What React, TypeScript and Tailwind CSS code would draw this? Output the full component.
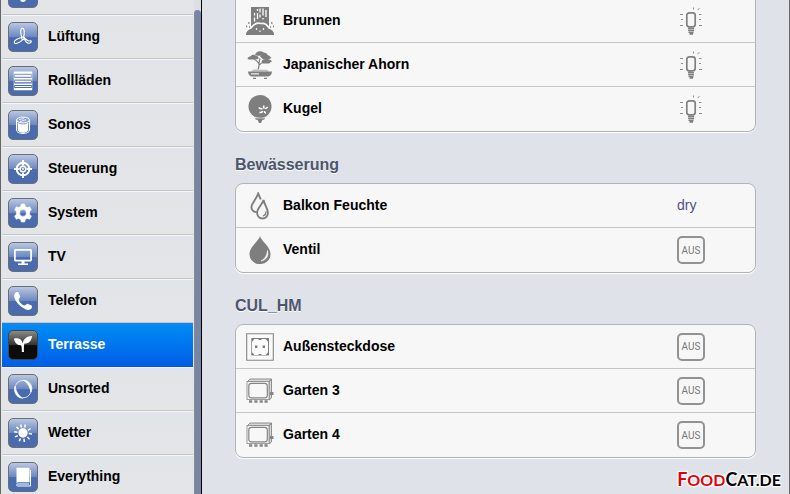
import type { ReactNode } from 'react';

const roomIcons: Record<string, ReactNode> = {
  Licht: <path d="M10 2a6 6 0 0 1 6 6c0 4-3 5-3 8a3 3 0 0 1-6 0c0-3-3-4-3-8a6 6 0 0 1 6-6z" fill="#fff" />,
  Lüftung: (
    <g fill="none" stroke="#fff" strokeWidth="1.100">
      <path d="M9 10.500C7.500 7 7 1.500 9.200 1.200 12 1 11.500 7 10.500 10.500" />
      <path d="M9 10.500C5 11 .8 13.500 1.300 15.600 2 18 7 15.500 9.800 12.600" />
      <path d="M10.800 10.500C12 14 14 17 17 16 19 15 18.500 13 17 14 15 14.500 13 12.500 11 10.500" />
      <circle cx="10" cy="11.300" r="1.300" />
    </g>
  ),
  Rollläden: (
    <g fill="#fff">
      <path d="M1 0.500h18v2.300H1zM2 4h16v1.700H2zM1 7h18v1.500H1zM2 9.800h16v1.500H2zM1 12.500h18V14H1zM2 15h16v1H2zM1 17h18v2.300H1z" />
      <path d="M1 1v18M19 1v18" stroke="#fff" strokeWidth="0.500" />
    </g>
  ),
  Sonos: (
    <g stroke="#fff">
      <path d="M3.500 5v10c0 2.200 3 3.500 6.500 3.500s6.500-1.300 6.500-3.500V5" fill="none" strokeWidth="1" />
      <path d="M5 8v7.500c1 1.500 3 2 5 2s4-.5 5-2V8c-1 1-3 1.500-5 1.500S6 9 5 8z" fill="#fff" strokeWidth="0.500" />
      <ellipse cx="10" cy="5" rx="6.500" ry="2.900" fill="#8ea6d3" strokeWidth="1" />
      <path d="M6 4.500c2 0 3-1 5-1M7 6.500c2 0 4-2 6-1.500" fill="none" strokeWidth="0.800" />
    </g>
  ),
  Steuerung: (
    <g fill="none" stroke="#fff">
      <circle cx="10" cy="10" r="6.300" strokeWidth="2" />
      <circle cx="10" cy="10" r="2.800" strokeWidth="1.500" />
      <circle cx="10" cy="10" r="1" fill="#fff" stroke="none" />
      <path d="M10 1v5.500M10 13.500V19M1 10h5.500M13.500 10H19" strokeWidth="2" />
    </g>
  ),
  System: (
    <path
      d="M8.300 1h3.400l.6 2.500 1.900 1.100 2.500-.8 1.700 3-1.800 1.900v2.600l1.800 1.900-1.700 3-2.500-.8-1.900 1.100-.6 2.500H8.300l-.6-2.500-1.900-1.100-2.500.8-1.700-3 1.800-1.900V8.700L1.600 6.800l1.700-3 2.500.8 1.900-1.100zM10 6.600a3.400 3.400 0 1 0 0 6.800 3.400 3.400 0 0 0 0-6.800z"
      fill="#fff"
      stroke="#fff"
      strokeWidth="0.600"
      strokeLinejoin="round"
      fillRule="evenodd"
    />
  ),
  TV: (
    <g fill="none" stroke="#fff">
      <rect x="1.900" y="2.900" width="16.200" height="10.700" rx="0.500" strokeWidth="1.700" />
      <path d="M10 14v3" strokeWidth="3" />
      <path d="M5 17.200h10" strokeWidth="1.600" />
    </g>
  ),
  Telefon: (
    <path
      d="M2 2.200C3 1 4.800.8 5.500 1.500l1.700 4c.2.800-1.600 2-1.500 2.900.4 2.600 3.300 5.500 6 6 1 .2 2-1.800 2.900-1.600l4 1.800c.8.700.4 2.600-.6 3.500-1.700 1.500-5.600.8-9-1.800C4.800 13 1.600 9.200 1.200 5.500 1.100 4.300 1.400 3 2 2.200z"
      fill="#fff"
    />
  ),
  Terrasse: (
    <path
      d="M1 3.500c4.500-1 8 .5 8.700 5 .5-4.500 4-7.300 9.300-7.500-.3 4.800-3.200 7.800-7.500 7.600-.6 1.200-.6 3-.5 8.400H8.800c.1-4 0-5.500-.8-6.800C3.800 10.400 1.500 7.500 1 3.500z"
      fill="#fff"
    />
  ),
  Unsorted: (
    <g fill="#fff">
      <path d="M2.200 7C.3 11.500 2.500 18.500 9.500 19.200 5.500 16.800 2.700 12.500 2.200 7z" stroke="#fff" strokeWidth="0.800" />
      <path d="M10.500 1.200c7 .3 10 7.500 7.300 12.300C17.300 8.300 15 4 10.500 1.200z" stroke="#fff" strokeWidth="0.800" />
      <path d="M2.500 6.500a8.500 8.500 0 0 1 8-5M17.500 13.800a8.500 8.500 0 0 1-8 5" fill="none" stroke="#fff" strokeWidth="0.800" />
    </g>
  ),
  Wetter: (
    <g stroke="#fff" strokeWidth="1.500">
      <circle cx="10" cy="10" r="3.900" fill="#fff" />
      <path d="M8.300 4.500 7.700 1.500M11.700 4.500l.6-3M15 7.400l2.600-1.900M15.700 10.600l3.300.4M14.300 14l2.200 2.300M11 15.800l.3 3.200M7.500 15.400l-1.200 2.900M4.800 12.700l-2.900 1.200M4.400 9.200l-3.200-.4M5.700 6.100 3.500 3.900" />
    </g>
  ),
  Everything: (
    <g>
      <path d="M4 .8h12.500v14.500H5.500C4 15.300 3.500 16 3.500 17V2C3 1.200 3.500.8 4 .8z" fill="#fff" />
      <path d="M16 17H5c-2 0-2 2 0 2h12.500V3" fill="none" stroke="#fff" strokeWidth="1" />
    </g>
  ),
};

const rooms = ['Lüftung', 'Rollläden', 'Sonos', 'Steuerung', 'System', 'TV', 'Telefon', 'Terrasse', 'Unsorted', 'Wetter', 'Everything'];

function FountainIcon() {
  return (
    <>
      <path d="M5 0h18v19H5z" fill="#7e7e7e" />
      <path d="M8.500 6v2.500M8.500 10.500v4M11.500 2v2M11.500 6v6M14 1.500v4M14 7.500v3M17 1.500v7M20 3v7M17 11v1.500" stroke="#fff" strokeWidth="1.300" />
      <path d="M-1 28.500c0-4 3-6.500 6-7.500 3-4.500 6.500-5.500 10-4.500 3.500-.8 6 1 8 4.500 3 .8 6 3.500 6 7.500z" fill="#7e7e7e" stroke="#f7f7f7" strokeWidth="1.600" />
      <path d="M0 28v-1.500h28V28z" fill="#7e7e7e" />
      <path d="M10.500 21v2M14 23.500v1.500M17.500 21v2" stroke="#eee" strokeWidth="1.300" />
      <path d="M2 16h1.500M0 19.500h1.200M3 20h1M25 16h1.500M27 19.500h1M24 20h1" stroke="#7e7e7e" strokeWidth="1.400" />
    </>
  );
}

function BonsaiIcon() {
  return (
    <g fill="#7e7e7e">
      <path d="M9 3.500C10 2 11.500.2 14 .3c2.500-.3 3 1.200 5 1.500 2 .5 2.500 1.500 2.500 3H11z" />
      <path d="M1.500 8c.5-2 1.500-2.500 3.200-2.800C6 3.500 8.500 3.300 10 4.700c2 .3 2.500 1.400 2.800 2.800L10 8.600H3z" />
      <path d="M14 5.500c1-2 4-2.500 6-1.800 2.500 0 4 1.500 5.500 3.300l-3 1.300H17z" />
      <path d="M15.500 10.500c.5-2 2.500-2.800 5-2.500 2.500-.2 4.500.8 5.500 2.300L23 12.500h-6z" />
      <path d="M8 8.500c2.500.5 3.500 2 4.500 3.500 1 1.500.5 4-.5 6.500M14 7.500c-.5 2-1 3-1 5M18 11.500c-2 0-3.500.5-4.500 2.500" fill="none" stroke="#7e7e7e" strokeWidth="1.200" />
      <path d="M5 20.500c2-2.500 5-1.800 7-1.800h9l2 1.800z" fill="#bdbdbd" />
      <path d="M2 20.500h24c-.3 3.500-2 5-4.500 5h-15C4 25.500 2.300 24 2 20.500z" />
      <path d="M5 22.800h8" stroke="#d5d5d5" strokeWidth="1.600" />
      <path d="M7 27.300h3M18 27.300h3" stroke="#7e7e7e" strokeWidth="1.200" />
    </g>
  );
}

function GlobeIcon() {
  return (
    <g fill="#7e7e7e">
      <circle cx="14" cy="11.500" r="11.500" />
      <path d="M8.500 22.800h11l-1.500 2H10zM11.500 24.500h5L15 28h-2z" />
      <path d="M7.500 23h13" stroke="#f7f7f7" strokeWidth="0.600" />
      <path d="M12.800 12.500q1.800 2 3.700 1M18 10.500q-1 2 .5 3M22 12.500q-1.500-.5-2.500 1.500M13.500 17.500q2.500.5 3-1.500M18.500 16q0 2 1.500 2" fill="none" stroke="#fff" strokeWidth="1.500" />
    </g>
  );
}

function DropsIcon() {
  return (
    <g fill="none" stroke="#7e7e7e" strokeWidth="1.900">
      <path d="M10.500 20C7 20 5.200 17.500 5.500 14.500c.3-3.500 4.700-7 6.700-13 1 2.500 2 4 2.500 6" />
      <path d="M17.500 8c-1 4.500-6.200 8-6.400 12.500-.1 3.700 2.400 6 5.400 6 3.400 0 5.500-2.500 5.400-5.700C21.700 16.500 18.500 12.500 17.500 8z" />
      <path d="M19.800 19.500c.3 2.500-.8 4-3 4.500" strokeWidth="1.200" />
    </g>
  );
}

function ValveIcon() {
  return (
    <>
      <path d="M14 0c1 5 10.500 10.500 10.500 18A10 10 0 0 1 14 28 10 10 0 0 1 3.500 18C3.500 10.500 13 5 14 0z" fill="#7e7e7e" />
      <path d="M21.500 14.500c1.300 5-.8 9.500-6.500 10.500 4-2 6-5.500 6.500-10.500z" fill="#fff" stroke="#fff" strokeWidth="0.600" />
    </>
  );
}

function SocketIcon() {
  return (
    <g>
      <path d="M.7.7h26.600v26.600H.7z" fill="#fafafa" stroke="#858585" strokeWidth="1.100" />
      <path d="M5.300 5h17.700v17.500H5.300z" fill="#7e7e7e" />
      <path d="M8.500 6h4v1h3V6h4l2.500 2.700v10.600L19.500 22h-4v-1h-3v1h-4L6 19.300V8.700z" fill="#fafafa" />
      <path d="M9 13.700h2.400M16.600 13.700H19" stroke="#7e7e7e" strokeWidth="2.400" />
    </g>
  );
}

function RelayIcon() {
  return (
    <g fill="none" stroke="#858585">
      <path d="M1 5 4 2h21.500L23 5zM23 5l2.500-3v19L23 23z" fill="#d7d7d7" strokeWidth="0.900" />
      <rect x="1" y="4.500" width="22" height="18" fill="#f7f7f7" strokeWidth="0.800" />
      <rect x="2.800" y="6.300" width="18.500" height="14.500" rx="2.500" strokeWidth="1.200" />
      <path d="M3 24.500h3.200M8.300 24.500h3.200M13.600 24.500h3.200M18.500 24.500h3.200" strokeWidth="2.600" />
      <path d="M24 16.500h3.500" strokeWidth="3" />
    </g>
  );
}

function BulbIcon() {
  return (
    <svg viewBox="0 0 28 28" className="size-7" fill="none" stroke="#808080" aria-hidden="true">
      <rect x="9.800" y="5.800" width="8.400" height="14" rx="2.500" strokeWidth="1.700" />
      <path d="M11 21.200l6 .6M11 23.200l6 .6M11.500 25.200l5 .6M12.500 27h3.500" strokeWidth="1.500" />
      <path d="M3 7.500h3M4 12.500h2M3 18.500h3M22 7.500h2.500M22 12.500h2M22 18.500h3M16.500.5v2M20.500 2.800l2-1.300" strokeWidth="0.900" />
    </svg>
  );
}

type Device = { name: string; icon: ReactNode; state: 'bulb' | 'aus' | 'dry' };

function DeviceList({ devices, clipped }: { devices: Device[]; clipped?: boolean }) {
  return (
    <ul
      className={
        clipped
          ? '-mt-px rounded-b-lg border border-t-0 border-[#b0b4ba] bg-[#f7f7f7] shadow-[0_1px_1px_#fff]'
          : 'rounded-lg border border-[#b0b4ba] bg-[#f7f7f7] shadow-[0_1px_1px_#fff]'
      }
    >
      {devices.map((d) => (
        <li key={d.name} className="flex h-11 items-center border-b border-[#c4c6c9] pl-2.5 last:border-b-0">
          <svg viewBox="0 0 28 28" className="size-7 shrink-0" aria-hidden="true">
            {d.icon}
          </svg>
          <span className="ml-[9px] flex-1 pb-0.5 text-sm font-bold text-black">{d.name}</span>
          <div className="w-[78px]">
            {d.state === 'dry' && <span className="block pb-0.5 text-sm text-[#4f4f8c]">dry</span>}
            {d.state === 'bulb' && (
              <button aria-label={d.name} className="block">
                <BulbIcon />
              </button>
            )}
            {d.state === 'aus' && (
              <button
                aria-label={`${d.name} AUS`}
                className="flex size-7 items-center justify-center rounded-[5px] border-2 border-[#929292] font-['Liberation_Sans_Narrow',Roboto,sans-serif] text-[10px] text-[#777]"
              >
                AUS
              </button>
            )}
          </div>
        </li>
      ))}
    </ul>
  );
}

function Heading({ children }: { children: ReactNode }) {
  return <h2 className="pt-[21px] pb-1.5 text-base leading-6 font-bold text-[#4c566c] [text-shadow:0_1px_0_#fff]">{children}</h2>;
}

function RoomLink({ room, active, label = true }: { room: string; active?: boolean; label?: boolean }) {
  return (
    <a
      href={`#${room}`}
      aria-label={room}
      className={
        active
          ? 'flex h-11 items-center border-t border-b border-t-[#2a80d8] border-b-[#0a55d5] bg-linear-to-b from-[#058cf5] to-[#015de6] pl-1.5 text-white'
          : 'flex h-11 items-center border-t border-b border-t-[#f5f6f7] border-b-[#c2c4c7] bg-linear-to-b from-[#e1e4e8] to-[#e4e5e7] pl-1.5 text-black'
      }
    >
      <span
        className={
          active
            ? 'flex size-[30px] items-center justify-center rounded-[5px] border border-[#444] bg-linear-to-b from-[#8c8c8c] from-0% via-[#333] via-50% to-[#0c0c0c] to-52%'
            : 'flex size-[30px] items-center justify-center rounded-[5px] border border-[#6a6d74] bg-linear-to-b from-[#b9c6e1] from-0% via-[#6a87c0] via-50% to-[#4a6cae] to-52%'
        }
      >
        <svg viewBox="0 0 20 20" className="size-5" aria-hidden="true">
          {roomIcons[room]}
        </svg>
      </span>
      {label && <span className="ml-2.5 pb-0.5 text-sm font-bold">{room}</span>}
    </a>
  );
}

export default function App() {
  return (
    <div className="flex h-screen overflow-hidden bg-[#dfe2e8] font-['Liberation_Sans',Arial,sans-serif]">
      <aside className="flex w-[202px] shrink-0 overflow-hidden border-r border-l border-r-black border-l-[#666] bg-[#e2e4e8]">
        <nav className="-mt-[29px] flex-1 px-px">
          <RoomLink room="Licht" label={false} />
          {rooms.map((room) => (
            <RoomLink key={room} room={room} active={room === 'Terrasse'} />
          ))}
        </nav>
        <div className="w-[7px] bg-[#dcdfe4] pt-2.5">
          <div className="h-full rounded-t-sm border-l border-[#8b8b8e] bg-[#7886a6]" />
        </div>
      </aside>

      <main className="relative flex-1 overflow-hidden border-r border-[#66666c] px-[33px]">
        <DeviceList
          clipped
          devices={[
            { name: 'Brunnen', icon: <FountainIcon />, state: 'bulb' },
            { name: 'Japanischer Ahorn', icon: <BonsaiIcon />, state: 'bulb' },
            { name: 'Kugel', icon: <GlobeIcon />, state: 'bulb' },
          ]}
        />
        <Heading>Bewässerung</Heading>
        <DeviceList
          devices={[
            { name: 'Balkon Feuchte', icon: <DropsIcon />, state: 'dry' },
            { name: 'Ventil', icon: <ValveIcon />, state: 'aus' },
          ]}
        />
        <Heading>CUL_HM</Heading>
        <DeviceList
          devices={[
            { name: 'Außensteckdose', icon: <SocketIcon />, state: 'aus' },
            { name: 'Garten 3', icon: <RelayIcon />, state: 'aus' },
            { name: 'Garten 4', icon: <RelayIcon />, state: 'aus' },
          ]}
        />
        <p className="absolute right-2 bottom-1 font-[Lato,sans-serif] text-base leading-5 font-bold text-black [text-shadow:1px_1px_1px_#fff,-1px_-1px_1px_#fff,1px_-1px_1px_#fff,-1px_1px_1px_#fff,0_0_3px_#fff]">
          <span className="text-[#e3000b]">
            <span className="text-lg leading-5">F</span>OOD
          </span>
          <span className="text-lg leading-5">C</span>AT.DE
        </p>
      </main>
    </div>
  );
}
